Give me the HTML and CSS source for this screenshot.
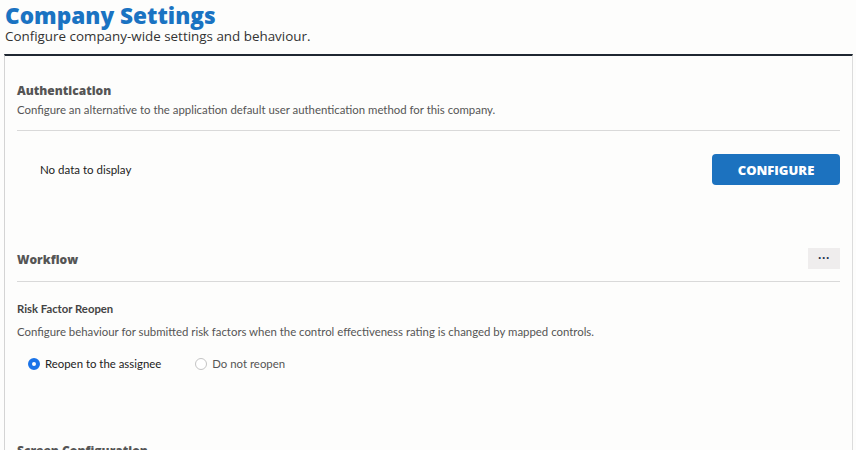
FILE: index.html
```html
<!DOCTYPE html>
<html>
<head>
<meta charset="utf-8">
<link rel="stylesheet" href="styles.css">
</head>
<body>
<header class="page-header">
  <h1 class="page-title">Company Settings</h1>
  <p class="page-subtitle">Configure company-wide settings and behaviour.</p>
</header>
<main class="panel">
  <section class="section">
    <h2 class="section-title">Authentication</h2>
    <p class="section-desc">Configure an alternative to the application default user authentication method for this company.</p>
    <div class="divider"></div>
    <div class="auth-row">
      <span class="empty-text">No data to display</span>
      <button class="btn-primary">CONFIGURE</button>
    </div>
  </section>
  <section class="section workflow">
    <div class="section-head">
      <h2 class="section-title">Workflow</h2>
      <button class="btn-more">&middot;&middot;&middot;</button>
    </div>
    <div class="divider"></div>
    <h3 class="sub-title">Risk Factor Reopen</h3>
    <p class="sub-desc">Configure behaviour for submitted risk factors when the control effectiveness rating is changed by mapped controls.</p>
    <div class="radio-row">
      <label class="radio checked"><span class="radio-dot"></span>Reopen to the assignee</label>
      <label class="radio"><span class="radio-dot"></span>Do not reopen</label>
    </div>
  </section>
  <section class="section screen">
    <h2 class="section-title">Screen Configuration</h2>
  </section>
</main>
</body>
</html>
```
FILE: styles.css
```css
html, body {
  margin: 0;
  padding: 0;
  background: #fdfdfc;
}
body {
  font-family: "Open Sans", "Liberation Sans", sans-serif;
  color: #333;
  overflow: hidden;
  height: 450px;
}
.page-header {
  padding: 3px 5px 0 5px;
}
.page-title {
  margin: 0;
  font-family: "Open Sans", sans-serif;
  font-weight: 800;
  font-size: 22.6px;
  line-height: 26px;
  color: #1a73c2;
}
.page-subtitle {
  margin: 0;
  font-size: 13.4px;
  line-height: 14px;
  color: #333;
}
.panel {
  box-sizing: border-box;
  margin: 11px 3px 0 4px;
  border-top: 2px solid #1f2731;
  border-left: 1px solid #d4d4d4;
  border-right: 1px solid #dcdcdc;
  padding: 26px 12px 0 12px;
  height: 396px;
  overflow: hidden;
}
.section-title {
  margin: 0;
  font-family: "Open Sans", sans-serif;
  font-weight: 800;
  font-size: 12px;
  line-height: 18px;
  color: #555;
}
.section-desc, .sub-desc {
  margin: 2px 0 0 0;
  font-family: "Lato", sans-serif;
  font-size: 11.4px;
  line-height: 16px;
  color: #555;
}
.divider {
  height: 1px;
  background: #d9d9d9;
  margin-top: 12px;
}
.auth-row {
  display: flex;
  align-items: center;
  justify-content: space-between;
  padding: 23px 0 0 23px;
}
.empty-text {
  font-family: "Lato", sans-serif;
  font-size: 11.5px;
  color: #222;
}
.btn-primary {
  width: 128px;
  height: 31px;
  border: none;
  border-radius: 4px;
  background: #1c72bf;
  color: #fff;
  font-family: "Open Sans", sans-serif;
  font-weight: 800;
  font-size: 13px;
  cursor: pointer;
}
.workflow {
  margin-top: 63px;
}
.section-head {
  display: flex;
  align-items: center;
  justify-content: space-between;
  height: 21px;
}
.section-head .section-title {
  position: relative;
  top: 1px;
}
.btn-more {
  width: 32px;
  height: 21px;
  border: none;
  background: #efeded;
  color: #1f3550;
  font-weight: 800;
  font-size: 12px;
  padding: 0;
  line-height: 21px;
}
.workflow .divider {
  margin-top: 12px;
}
.sub-title {
  margin: 19px 0 0 0;
  font-family: "Lato", sans-serif;
  font-weight: 700;
  font-size: 11.3px;
  line-height: 16px;
  color: #444;
}
.sub-desc {
  margin-top: 7px;
}
.radio-row {
  display: flex;
  gap: 34px;
  padding: 17px 0 0 11px;
}
.radio {
  display: flex;
  align-items: center;
  gap: 5px;
  font-family: "Lato", sans-serif;
  font-size: 11.4px;
  color: #222;
}
.radio + .radio {
  color: #555;
}
.radio-dot {
  width: 10px;
  height: 10px;
  border-radius: 50%;
  border: 1px solid #c4c4c4;
  background: #fff;
  box-sizing: content-box;
}
.radio.checked .radio-dot {
  width: 4px;
  height: 4px;
  border: 4px solid #1a73e8;
}
.screen {
  margin-top: 72px;
}
```
